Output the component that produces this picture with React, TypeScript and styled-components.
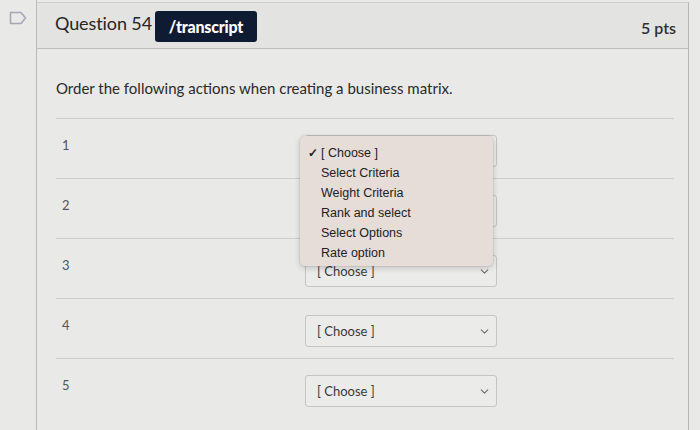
import styled, { createGlobalStyle } from "styled-components";
import { ChevronDown } from "lucide-react";

const Global = createGlobalStyle`
  html, body {
    margin: 0;
    padding: 0;
    background: #e9e9e7;
    font-family: Lato, "Open Sans", sans-serif;
    color: #2d2d2d;
  }
`;

const Page = styled.div`
  display: flex;
  width: 700px;
  height: 430px;
  overflow: hidden;
  background: #e9e9e7;
`;

const Gutter = styled.div`
  width: 36px;
  flex-shrink: 0;
  border-right: 1px solid #b9b9b9;
  padding-top: 11px;
  display: flex;
  justify-content: center;
  align-items: flex-start;
`;

const Panel = styled.div`
  width: 651px;
  margin-top: 2px;
  border-top: 1px solid #cfcfcd;
  border-right: 1px solid #b5b5b3;
  display: flex;
  flex-direction: column;
`;

const Header = styled.div`
  height: 45px;
  display: flex;
  align-items: center;
  justify-content: space-between;
  padding: 0 12px 0 18px;
  background: #e3e3e1;
  border-bottom: 1px solid #bdbdbb;
`;

const TitleGroup = styled.div`
  display: flex;
  align-items: center;
  gap: 3px;
`;

const Title = styled.span`
  font-size: 18px;
  color: #262626;
  letter-spacing: -0.1px;
  margin-bottom: 5px;
`;

const Badge = styled.span`
  display: inline-flex;
  align-items: center;
  justify-content: center;
  width: 102px;
  height: 31px;
  background: #0e1b33;
  border-radius: 3px;
  color: #ffffff;
  font-size: 16px;
  font-weight: 900;
  letter-spacing: -0.2px;
  margin-top: 1px;
`;

const Points = styled.span`
  font-size: 16px;
  font-weight: 600;
  color: #2f2f2f;
  margin-top: 3px;
`;

const Body = styled.div`
  padding: 29px 14px 0 19px;
`;

const Prompt = styled.p`
  margin: 0 0 20px;
  font-size: 15px;
  line-height: 20px;
  color: #2a2a2a;
`;

const Rows = styled.div`
  position: relative;
`;

const Row = styled.div`
  display: grid;
  grid-template-columns: 249px 192px;
  align-items: start;
  height: 60px;
  box-sizing: border-box;
  border-top: 1px solid #cdcdcb;
  padding-top: 16px;
`;

const Num = styled.span`
  font-size: 13px;
  line-height: 16px;
  color: #555555;
  padding-left: 6px;
  margin-top: 2px;
`;

const Select = styled.div`
  height: 32px;
  box-sizing: border-box;
  border: 1px solid #c4c4c2;
  border-radius: 3px;
  background: #ebebe9;
  display: flex;
  align-items: center;
  justify-content: space-between;
  padding: 0 5px 0 11px;
  font-size: 13px;
  color: #3a3a3a;

  svg {
    color: #6d6d6d;
  }
`;

const Menu = styled.div`
  position: absolute;
  left: 244px;
  top: 18px;
  width: 193px;
  height: 130px;
  box-sizing: border-box;
  padding: 7px 0 0;
  background: #e6dcd8;
  border-radius: 5px;
  box-shadow: 0 2px 6px rgba(0, 0, 0, 0.18), 0 0 0 1px rgba(0, 0, 0, 0.05);
  font-family: "Liberation Sans", Arial, sans-serif;
  font-size: 12.5px;
`;

const Option = styled.div`
  height: 20px;
  line-height: 20px;
  padding-left: 21px;
  position: relative;
  color: #222222;
`;

const Check = styled.span`
  position: absolute;
  left: 8px;
  top: 0;
  font-size: 12px;
  font-weight: 700;
`;

function Bookmark() {
  return (
    <svg width="18" height="14" viewBox="0 0 18 14" fill="none">
      <path
        d="M1.5 1.5 H12 L16.5 7 L12 12.5 H1.5 Z"
        stroke="#a7a5b8"
        strokeWidth="1.6"
        strokeLinejoin="round"
      />
    </svg>
  );
}

const options = [
  "[ Choose ]",
  "Select Criteria",
  "Weight Criteria",
  "Rank and select",
  "Select Options",
  "Rate option",
];

export default function App() {
  return (
    <Page>
      <Global />
      <Gutter>
        <Bookmark />
      </Gutter>
      <Panel>
        <Header>
          <TitleGroup>
            <Title>Question 54</Title>
            <Badge>/transcript</Badge>
          </TitleGroup>
          <Points>5 pts</Points>
        </Header>
        <Body>
          <Prompt>Order the following actions when creating a business matrix.</Prompt>
          <Rows>
            {[1, 2, 3, 4, 5].map((n) => (
              <Row key={n}>
                <Num>{n}</Num>
                <Select>
                  <span>[ Choose ]</span>
                  <ChevronDown size={13} strokeWidth={2} />
                </Select>
              </Row>
            ))}
            <Menu>
              {options.map((o, i) => (
                <Option key={o}>
                  {i === 0 && <Check>✓</Check>}
                  {o}
                </Option>
              ))}
            </Menu>
          </Rows>
        </Body>
      </Panel>
    </Page>
  );
}
